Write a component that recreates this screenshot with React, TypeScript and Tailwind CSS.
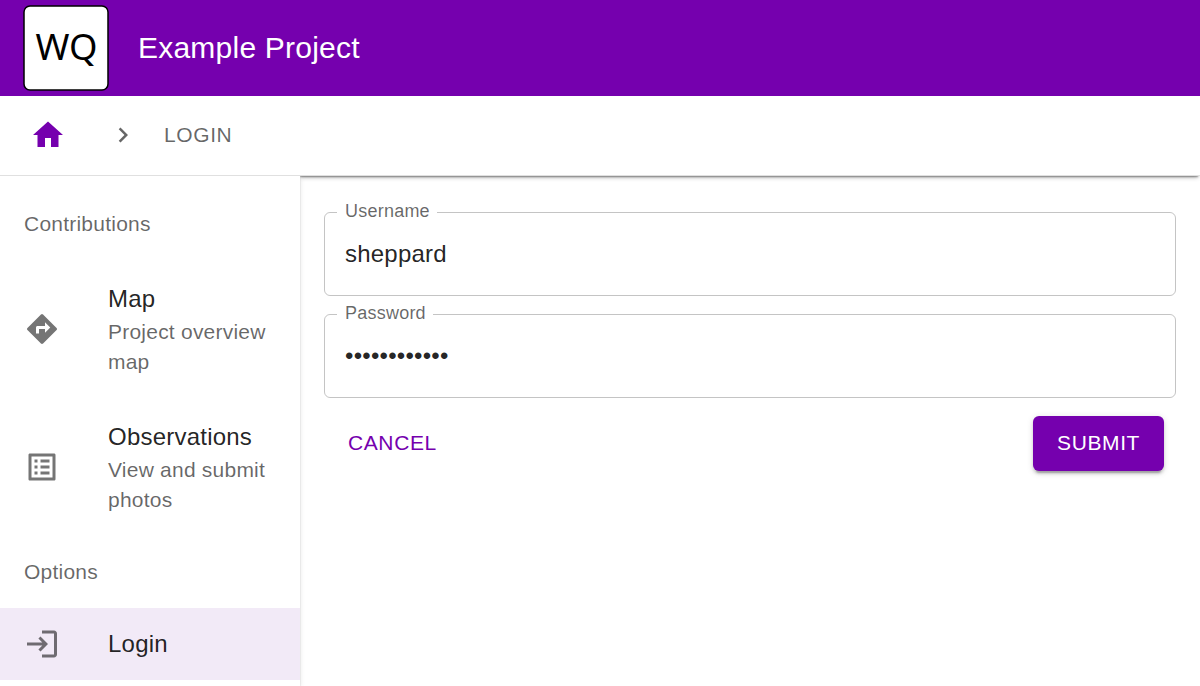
import React from "react";

type IconProps = { d: string; className?: string };

function Icon({ d, className = "size-9" }: IconProps) {
  return (
    <svg viewBox="0 0 24 24" className={`${className} shrink-0 fill-current`} aria-hidden="true">
      <path d={d} />
    </svg>
  );
}

const icons = {
  home: "M10 20v-6h4v6h5v-8h3L12 3 2 12h3v8z",
  next: "M10 6 8.59 7.41 13.17 12l-4.58 4.59L10 18l6-6z",
  directions:
    "m21.71 11.29-9-9a.9959.9959 0 0 0-1.41 0l-9 9c-.39.39-.39 1.02 0 1.41l9 9c.39.39 1.02.39 1.41 0l9-9c.39-.38.39-1.01 0-1.41zM14 14.5V12h-4v3H8v-4c0-.55.45-1 1-1h5V7.5l3.5 3.5-3.5 3.5z",
  list: "M19 5v14H5V5h14m1.1-2H3.9c-.5 0-.9.4-.9.9v16.2c0 .4.4.9.9.9h16.2c.4 0 .9-.5.9-.9V3.9c0-.5-.5-.9-.9-.9zM11 7h6v2h-6V7zm0 4h6v2h-6v-2zm0 4h6v2h-6zM7 7h2v2H7zm0 4h2v2H7zm0 4h2v2H7z",
  login:
    "M11 7 9.6 8.4l2.6 2.6H2v2h10.2l-2.6 2.6L11 17l5-5-5-5zm9 12h-8v2h8c1.1 0 2-.9 2-2V5c0-1.1-.9-2-2-2h-8v2h8v14z",
};

function Logo() {
  return (
    <svg viewBox="0 0 96 96" className="size-24" role="img" aria-label="WQ">
      <rect x="6" y="6" width="84" height="84" rx="6" fill="#fff" stroke="#000" strokeWidth="1.5" />
      <text x="48.5" y="60" textAnchor="middle" fontSize="36.5" letterSpacing="0" fontFamily="'Noto Sans', sans-serif">
        WQ
      </text>
    </svg>
  );
}

function Subheader({ children }: { children: React.ReactNode }) {
  return <h2 className="px-6 text-[21px] leading-[72px] text-black/60">{children}</h2>;
}

type ItemProps = { icon: string; title: string; detail?: string; selected?: boolean };

function NavItem({ icon, title, detail, selected = false }: ItemProps) {
  return (
    <li className={selected ? "flex items-center bg-[#f2eaf7] px-6 py-3" : "flex items-center px-6 py-3"}>
      <span className="flex w-[84px] shrink-0 text-black/[.54]">
        <Icon d={icon} />
      </span>
      <div className={detail ? "my-[9px]" : "my-1.5"}>
        <div className="text-2xl leading-9">{title}</div>
        {detail && <div className="text-[21px] leading-[30px] text-black/60">{detail}</div>}
      </div>
    </li>
  );
}

type FieldProps = { label: string; type: string; value: string };

function Field({ label, type, value }: FieldProps) {
  return (
    <fieldset className="h-[93px] min-w-0 rounded-md border border-black/[.23] px-3">
      <legend className="h-[18px] pl-2 pr-[7px] text-lg leading-4 text-black/60">{label}</legend>
      <input
        type={type}
        defaultValue={value}
        aria-label={label}
        className="block h-[66px] w-full bg-transparent px-2 text-2xl tracking-[.225px] outline-none"
      />
    </fieldset>
  );
}

export default function App() {
  return (
    <div className="flex h-[686px] flex-col overflow-hidden bg-white font-['Liberation_Sans',Arial,sans-serif] tracking-[.225px] text-black/[.87]">
      <header className="flex h-24 shrink-0 items-center bg-[#7500ae] pl-[18px] text-white">
        <Logo />
        <h1 className="ml-6 text-[30px] leading-[48px]">Example Project</h1>
      </header>
      <nav className="flex h-20 shrink-0 items-center border-b border-[#e0e0e0] pb-0.5 pl-[30px]">
        <a href="#" className="text-[#7500ae]">
          <Icon d={icons.home} />
        </a>
        <span className="ml-[42px] text-black/60">
          <Icon d={icons.next} className="size-[30px]" />
        </span>
        <span className="ml-[26px] text-[21px] tracking-[.6px] text-black/60">LOGIN</span>
      </nav>
      <div className="flex min-h-0 flex-1 overflow-hidden">
        <aside className="z-10 w-[300px] shrink-0 bg-white pt-3 shadow-[0_2px_2px_-1px_rgba(0,0,0,.2),0_1px_1px_rgba(0,0,0,.14),0_1px_5px_rgba(0,0,0,.12)]">
          <Subheader>Contributions</Subheader>
          <ul>
            <NavItem icon={icons.directions} title="Map" detail="Project overview map" />
            <NavItem icon={icons.list} title="Observations" detail="View and submit photos" />
          </ul>
          <Subheader>Options</Subheader>
          <ul>
            <NavItem icon={icons.login} title="Login" selected />
          </ul>
        </aside>
        <main className="min-w-0 flex-1">
          <div className="-mt-2 mr-0.5 h-2 shadow-[0_1px_2px_rgba(0,0,0,.4),0_1px_5px_rgba(0,0,0,.3)]" />
          <form className="px-6 pt-[27px]" onSubmit={(event) => event.preventDefault()}>
            <div className="flex flex-col gap-[9px]">
              <Field label="Username" type="text" value="sheppard" />
              <Field label="Password" type="password" value="••••••••••••" />
            </div>
            <div className="flex justify-between px-3 pt-[18px] text-[21px] tracking-[.6px]">
              <button type="button" className="h-[55px] px-3 pb-0.5 text-[#7500ae]">
                CANCEL
              </button>
              <button
                type="submit"
                className="h-[55px] rounded-md bg-[#7500ae] px-6 pb-0.5 text-white shadow-[0_4.5px_1.5px_-3px_rgba(0,0,0,.2),0_3px_3px_rgba(0,0,0,.14),0_1.5px_7.5px_rgba(0,0,0,.12)]"
              >
                SUBMIT
              </button>
            </div>
          </form>
        </main>
      </div>
    </div>
  );
}
